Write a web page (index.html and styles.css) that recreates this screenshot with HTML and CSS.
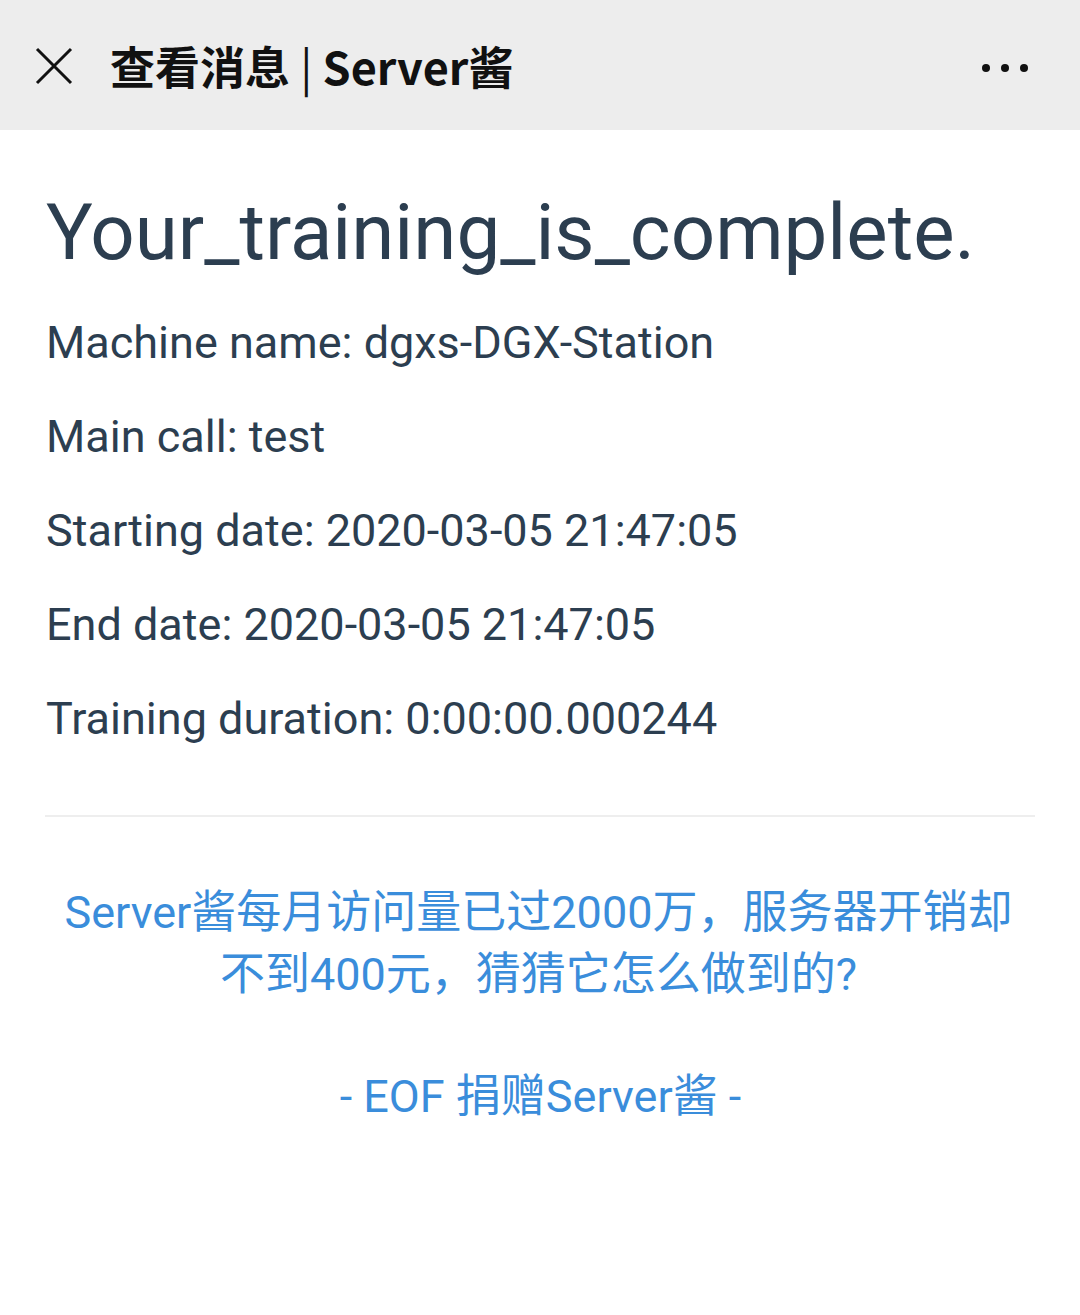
FILE: index.html
```html
<!DOCTYPE html>
<html lang="zh-CN">
<head>
<meta charset="utf-8">
<title>查看消息 | Server酱</title>
<link rel="stylesheet" href="styles.css">
</head>
<body>
<header class="topbar">
  <svg class="close" width="40" height="40" viewBox="0 0 40 40" aria-hidden="true">
    <path d="M3 3 L37 37 M37 3 L3 37" stroke="#111" stroke-width="3" fill="none"/>
  </svg>
  <div class="title">查看消息 <span class="title-bar">|</span> Server酱</div>
  <div class="more" aria-hidden="true"><span></span><span></span><span></span></div>
</header>
<main class="content">
  <h1 class="heading">Your_training_is_complete.</h1>
  <p class="line">Machine name: dgxs-DGX-Station</p>
  <p class="line">Main call: test</p>
  <p class="line">Starting date: 2020-03-05 21:47:05</p>
  <p class="line">End date: 2020-03-05 21:47:05</p>
  <p class="line">Training duration: 0:00:00.000244</p>
  <hr class="divider">
  <p class="promo">Server酱每月访问量已过2000万，服务器开销却不到400元，猜猜它怎么做到的?</p>
  <p class="eof">- EOF 捐赠Server酱 -</p>
</main>
</body>
</html>
```

FILE: styles.css
```css
html, body {
  margin: 0;
  padding: 0;
  background: #ffffff;
}

.topbar {
  height: 130px;
  background: #ededed;
  display: flex;
  align-items: center;
  padding: 0 0 0 34px;
  box-sizing: border-box;
}

.close {
  flex: none;
  width: 40px;
  height: 40px;
  margin-top: 2px;
}

.title {
  margin-left: 36px;
  font-family: "Noto Sans CJK SC", "Noto Sans", sans-serif;
  font-weight: 700;
  font-size: 45px;
  line-height: 1;
  color: #111111;
  margin-top: 0;
  flex: 1;
}

.title-bar {
  font-weight: 400;
}

.more {
  display: flex;
  gap: 11px;
  margin-right: 52px;
  margin-top: 6px;
}

.more span {
  width: 8px;
  height: 8px;
  border-radius: 50%;
  background: #111111;
}

.content {
  padding: 0 45px 0 46px;
  color: #2c3e50;
  font-family: Roboto, "Noto Sans CJK SC", sans-serif;
}

.heading {
  margin: 56px 0 0 0;
  font-size: 78px;
  font-weight: 400;
  line-height: 94px;
  letter-spacing: 0;
}

.line {
  margin: 0;
  font-size: 45px;
  line-height: 94px;
}

.line:first-of-type {
  margin-top: 16px;
}

.divider {
  border: none;
  height: 2px;
  background: #eeeeee;
  margin: 49px 0 0 -1px;
}

.promo {
  margin: 65px 0 0 0;
  padding: 0 18px 0 14px;
  text-align: center;
  color: #3a8ddb;
  font-size: 45px;
  line-height: 62px;
  font-family: Roboto, "Noto Sans CJK SC", sans-serif;
}

.eof {
  margin: 60px 0 0 0;
  text-align: center;
  color: #3a8ddb;
  font-size: 45px;
  line-height: 62px;
  font-family: Roboto, "Noto Sans CJK SC", sans-serif;
}
```
